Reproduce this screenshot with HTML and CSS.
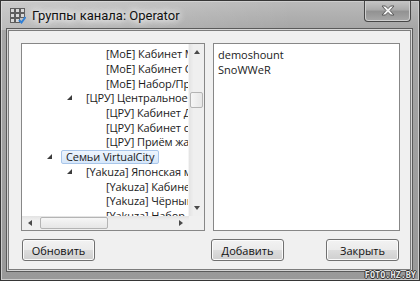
FILE: index.html
```html
<!DOCTYPE html>
<html lang="ru">
<head>
  <meta charset="UTF-8">
  <title>Группы канала: Operator</title>
  <link rel="stylesheet" href="styles.css">
</head>
<body>

  <div class="window">
    <!-- Title bar -->
    <div class="titlebar">
      <svg class="app-icon" width="16" height="16" viewBox="0 0 16 16">
        <rect x="0.5" y="0.5" width="4" height="4" fill="#d8d8d8" stroke="#5e5e5e"/>
        <rect x="5.5" y="0.5" width="4" height="4" fill="#d8d8d8" stroke="#5e5e5e"/>
        <rect x="10.5" y="0.5" width="4" height="4" fill="#d8d8d8" stroke="#5e5e5e"/>
        <rect x="0.5" y="5.5" width="4" height="4" fill="#d8d8d8" stroke="#5e5e5e"/>
        <rect x="5.5" y="5.5" width="4" height="4" fill="#d8d8d8" stroke="#5e5e5e"/>
        <rect x="10.5" y="5.5" width="4" height="4" fill="#d8d8d8" stroke="#5e5e5e"/>
        <rect x="0.5" y="10.5" width="4" height="4" fill="#d8d8d8" stroke="#5e5e5e"/>
        <rect x="5.5" y="10.5" width="4" height="4" fill="#d8d8d8" stroke="#5e5e5e"/>
        <path d="M9 12 L11.5 14.5 L15.5 9" fill="none" stroke="#2f7fd6" stroke-width="2"/>
      </svg>
      <span class="title">Группы канала: Operator</span>
      <div class="close-btn">
        <svg width="14" height="11" viewBox="0 0 14 11">
          <path d="M1 1 H4.5 L7 3.6 L9.5 1 H13 L9 5.5 L13 10 H9.5 L7 7.4 L4.5 10 H1 L5 5.5 Z" fill="#f4f4f4" stroke="#5a5a5a" stroke-width="1"/>
        </svg>
      </div>
    </div>

    <div class="frame-body">
      <div class="client">
        <div class="panels">
          <!-- Channel groups tree -->
          <div class="tree-box">
            <div class="tree-view">
              <div class="tree-rows">
                <div class="tree-row level-3"><span class="expander"></span><span class="label">[MoE] Кабинет Министра</span></div>
                <div class="tree-row level-3"><span class="expander"></span><span class="label">[MoE] Кабинет Советника</span></div>
                <div class="tree-row level-3"><span class="expander"></span><span class="label">[MoE] Набор/Приём</span></div>
                <div class="tree-row level-2"><span class="expander open"></span><span class="label">[ЦРУ] Центральное Управление</span></div>
                <div class="tree-row level-3"><span class="expander"></span><span class="label">[ЦРУ] Кабинет Директора</span></div>
                <div class="tree-row level-3"><span class="expander"></span><span class="label">[ЦРУ] Кабинет сотрудников</span></div>
                <div class="tree-row level-3"><span class="expander"></span><span class="label">[ЦРУ] Приём жалоб</span></div>
                <div class="tree-row level-1"><span class="expander open"></span><span class="label selected">Семьи VirtualCity</span></div>
                <div class="tree-row level-2"><span class="expander open"></span><span class="label">[Yakuza] Японская мафия</span></div>
                <div class="tree-row level-3"><span class="expander"></span><span class="label">[Yakuza] Кабинет босса</span></div>
                <div class="tree-row level-3"><span class="expander"></span><span class="label">[Yakuza] Чёрный рынок</span></div>
                <div class="tree-row level-3"><span class="expander"></span><span class="label">[Yakuza] Набор</span></div>
              </div>
              <div class="vscroll">
                <div class="sb-btn"><span class="arrow up"></span></div>
                <div class="sb-track v"><div class="sb-thumb v"></div></div>
                <div class="sb-btn"><span class="arrow down"></span></div>
              </div>
            </div>
            <div class="hscroll-row">
              <div class="hscroll">
                <div class="sb-btn h"><span class="arrow left"></span></div>
                <div class="sb-track h"><div class="sb-thumb h"></div></div>
                <div class="sb-btn h"><span class="arrow right"></span></div>
              </div>
              <div class="sb-corner"></div>
            </div>
          </div>

          <!-- Members list -->
          <div class="list-box">
            <div class="list-item">demoshount</div>
            <div class="list-item">SnoWWeR</div>
          </div>
        </div>

        <div class="buttons">
          <button class="btn btn-refresh">Обновить</button>
          <button class="btn btn-add">Добавить</button>
          <button class="btn btn-close">Закрыть</button>
        </div>
      </div>
    </div>

    <div class="watermark">FOTO.HZ.BY</div>
  </div>

</body>
</html>
```

FILE: styles.css
```css
/* styles.css */
body {
  margin: 0;
  padding: 0;
  font-family: "Open Sans", "Noto Sans", sans-serif;
  font-size: 11px;
  color: #1a1a1a;
}

.window {
  position: relative;
  width: 420px;
  height: 281px;
  box-sizing: border-box;
  border: 1px solid #363636;
  box-shadow: inset 0 0 0 1px #cdcdcd;
  background: linear-gradient(180deg, #bababa 0, #a6a6a6 28px, #999 100%);
  display: flex;
  flex-direction: column;
  overflow: hidden;
}

/* Title bar */
.titlebar {
  height: 29px;
  display: flex;
  align-items: center;
  padding-left: 9px;
  background: linear-gradient(90deg, rgba(255,255,255,0.25) 0, rgba(255,255,255,0.1) 45%, rgba(0,0,0,0) 70%);
}

.app-icon {
  flex: none;
  margin-top: 1px;
}

.title {
  margin-left: 6px;
  font-family: Roboto, "Open Sans", sans-serif;
  font-size: 13px;
  color: #111;
  text-shadow: 0 0 6px #fff, 0 0 10px #fff, 0 0 14px rgba(255,255,255,0.8);
}

.close-btn {
  align-self: flex-start;
  margin-top: -1px;
  margin-left: auto;
  margin-right: 8px;
  width: 47px;
  height: 22px;
  box-sizing: border-box;
  border: 1px solid #474747;
  border-top: none;
  border-radius: 0 0 4px 4px;
  box-shadow: inset 0 0 0 1px #cfcfcf;
  background: linear-gradient(180deg, #c9c9c9 0, #acacac 45%, #929292 55%, #a8a8a8 100%);
  display: flex;
  align-items: center;
  justify-content: center;
}

/* Frame and client area */
.frame-body {
  flex: 1;
  padding: 0 8px 10px 7px;
  display: flex;
}

.client {
  flex: 1;
  background-color: #f0f0f0;
  border: 1px solid #7c7c7c;
  box-shadow: 0 0 0 1px #d6d6d6, 0 0 0 2px #5a5a5a;
  padding: 12px 10px 8px 12px;
  display: flex;
  flex-direction: column;
}

.panels {
  display: grid;
  grid-template-columns: 184px 187px;
  column-gap: 8px;
  height: 188px;
}

/* Tree view */
.tree-box {
  border: 1px solid #878787;
  background-color: #fff;
  display: flex;
  flex-direction: column;
  overflow: hidden;
}

.tree-view {
  flex: 1;
  display: flex;
  min-height: 0;
}

.tree-rows {
  flex: 1;
  overflow: hidden;
  padding-top: 3px;
}

.tree-row {
  height: 14.7px;
  display: flex;
  align-items: center;
  white-space: nowrap;
  letter-spacing: -0.1px;
}

.level-1 { padding-left: 24px; }
.level-2 { padding-left: 44px; }
.level-3 { padding-left: 64px; }

.expander {
  flex: none;
  width: 15px;
  height: 6px;
  position: relative;
}

.expander.open::before {
  content: "";
  position: absolute;
  left: 1px;
  top: 0;
  width: 0;
  height: 0;
  border-style: solid;
  border-width: 0 0 5px 5px;
  border-color: transparent transparent #3c3c3c transparent;
}

.label {
  padding: 0 4px;
  border: 1px solid transparent;
  border-radius: 2px;
  line-height: 12px;
}

.label.selected {
  border-color: #a9c6ea;
  background: linear-gradient(180deg, #eef5fd 0, #d6e7fa 100%);
}

/* Scrollbars */
.vscroll {
  width: 15px;
  flex: none;
  display: flex;
  flex-direction: column;
  background: linear-gradient(90deg, #e3e3e3 0, #efefef 30%, #efefef 100%);
  border-left: 1px solid #f4f4f4;
}

.sb-btn {
  height: 16px;
  flex: none;
  display: flex;
  align-items: center;
  justify-content: center;
}

.sb-btn.h {
  width: 16px;
  height: auto;
}

.sb-track.v {
  flex: 1;
  padding-top: 32px;
}

.sb-thumb.v {
  height: 14px;
  margin: 0 1px;
  border: 1px solid #b4b4b4;
  border-radius: 2px;
  background: linear-gradient(90deg, #f6f6f6 0, #e6e6e6 100%);
}

.hscroll-row {
  height: 14px;
  display: flex;
  flex: none;
}

.hscroll {
  flex: 1;
  display: flex;
  background: linear-gradient(180deg, #e3e3e3 0, #efefef 30%, #efefef 100%);
}

.sb-track.h {
  flex: 1;
  padding: 1px 0 1px 2px;
  display: flex;
}

.sb-thumb.h {
  width: 66px;
  border: 1px solid #b4b4b4;
  border-radius: 2px;
  background: linear-gradient(180deg, #f6f6f6 0, #e6e6e6 100%);
}

.sb-corner {
  width: 15px;
  background-color: #f0f0f0;
}

.arrow {
  width: 0;
  height: 0;
  border-style: solid;
}

.arrow.up {
  border-width: 0 3.5px 4px 3.5px;
  border-color: transparent transparent #4a4a4a transparent;
}

.arrow.down {
  border-width: 4px 3.5px 0 3.5px;
  border-color: #4a4a4a transparent transparent transparent;
}

.arrow.left {
  border-width: 3.5px 4px 3.5px 0;
  border-color: transparent #4a4a4a transparent transparent;
}

.arrow.right {
  border-width: 3.5px 0 3.5px 4px;
  border-color: transparent transparent transparent #4a4a4a;
}

/* Members list */
.list-box {
  border: 1px solid #878787;
  background-color: #fff;
  padding: 3px 4px;
}

.list-item {
  height: 15px;
  line-height: 15px;
  white-space: nowrap;
}

/* Buttons */
.buttons {
  display: grid;
  grid-template-columns: 184px 187px;
  column-gap: 8px;
  margin-top: 8px;
}

.btn {
  width: 73px;
  height: 22px;
  border: 1px solid #707070;
  border-radius: 3px;
  background: linear-gradient(180deg, #f2f2f2 0, #ebebeb 50%, #dddddd 50%, #cfcfcf 100%);
  box-shadow: inset 0 0 0 1px #fbfbfb;
  font-family: "Open Sans", "Noto Sans", sans-serif;
  font-size: 11px;
  color: #111;
  padding: 0;
}

.btn-refresh {
  margin-left: 1px;
}

.btn-add {
  grid-column: 2;
  grid-row: 1;
  margin-left: -2px;
}

.btn-close {
  grid-column: 2;
  grid-row: 1;
  justify-self: end;
  margin-right: 1px;
}

/* Watermark stamped over the frame */
.watermark {
  position: absolute;
  right: 3px;
  bottom: 0;
  font-family: "DejaVu Sans Mono", monospace;
  font-size: 8.5px;
  font-weight: bold;
  line-height: 9px;
  color: #e6e6e6;
  text-shadow: 1px 0 0 #333, -1px 0 0 #333, 0 1px 0 #333, 0 -1px 0 #333;
}
```
